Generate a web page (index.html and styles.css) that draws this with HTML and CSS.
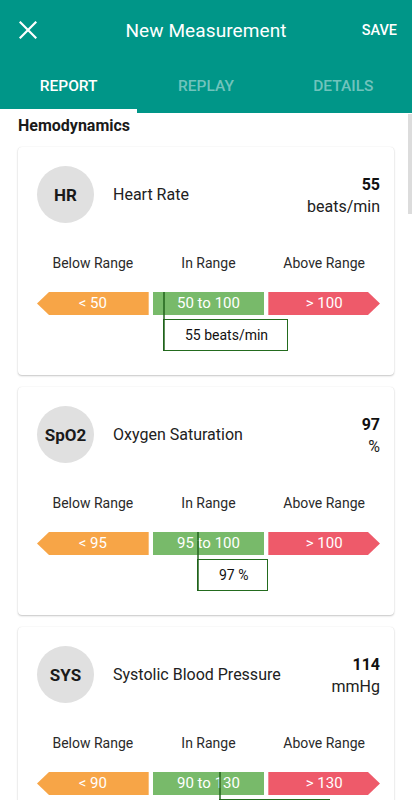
FILE: index.html
```html
<!DOCTYPE html>
<html lang="en">
<head>
<meta charset="utf-8">
<meta name="viewport" content="width=device-width, initial-scale=1">
<title>New Measurement</title>
<link rel="stylesheet" href="styles.css">
</head>
<body>
<div class="screen">
  <header class="appbar">
    <div class="toolbar">
      <div class="tb-left">
        <button class="close" aria-label="Close">
          <svg width="18" height="18" viewBox="0 0 18 18"><path d="M1.5 1.5 L16.5 16.5 M16.5 1.5 L1.5 16.5" stroke="#fff" stroke-width="2.2" fill="none" stroke-linecap="square"/></svg>
        </button>
      </div>
      <h1 class="title">New Measurement</h1>
      <div class="tb-right"><button class="save">SAVE</button></div>
    </div>
    <nav class="tabs">
      <div class="tab active">REPORT</div>
      <div class="tab">REPLAY</div>
      <div class="tab">DETAILS</div>
    </nav>
  </header>

  <main class="content">
    <h2 class="section">Hemodynamics</h2>

    <section class="card">
      <div class="card-head">
        <div class="avatar">HR</div>
        <div class="name">Heart Rate</div>
        <div class="value"><div class="num">55</div><div class="unit">beats/min</div></div>
      </div>
      <div class="labels"><span>Below Range</span><span>In Range</span><span>Above Range</span></div>
      <div class="bars">
        <div class="seg low">&lt; 50</div>
        <div class="seg mid">50 to 100</div>
        <div class="seg high">&gt; 100</div>
      </div>
      <div class="marker-row"><div class="marker" style="margin-left:126px">55 beats/min</div></div>
    </section>

    <section class="card">
      <div class="card-head">
        <div class="avatar">SpO2</div>
        <div class="name">Oxygen Saturation</div>
        <div class="value"><div class="num">97</div><div class="unit">%</div></div>
      </div>
      <div class="labels"><span>Below Range</span><span>In Range</span><span>Above Range</span></div>
      <div class="bars">
        <div class="seg low">&lt; 95</div>
        <div class="seg mid">95 to 100</div>
        <div class="seg high">&gt; 100</div>
      </div>
      <div class="marker-row"><div class="marker" style="margin-left:160px">97 %</div></div>
    </section>

    <section class="card">
      <div class="card-head">
        <div class="avatar">SYS</div>
        <div class="name">Systolic Blood Pressure</div>
        <div class="value"><div class="num">114</div><div class="unit">mmHg</div></div>
      </div>
      <div class="labels"><span>Below Range</span><span>In Range</span><span>Above Range</span></div>
      <div class="bars">
        <div class="seg low">&lt; 90</div>
        <div class="seg mid">90 to 130</div>
        <div class="seg high">&gt; 130</div>
      </div>
      <div class="marker-row"><div class="marker" style="margin-left:182px">114 mmHg</div></div>
    </section>
  </main>

  <div class="scrollbar"></div>
</div>
</body>
</html>
```

FILE: styles.css
```css
* { box-sizing: border-box; }
html, body {
  margin: 0;
  padding: 0;
  overflow: hidden;
  background: #fff;
}
body {
  font-family: Roboto, "Noto Sans", "Liberation Sans", sans-serif;
  color: #212121;
}
.screen {
  position: relative;
  width: 412px;
  height: 800px;
  overflow: hidden;
}
.appbar {
  background: #009688;
  color: #fff;
}
.toolbar {
  height: 60px;
  display: grid;
  grid-template-columns: 1fr auto 1fr;
  align-items: center;
}
.tb-left { padding-left: 19px; display: flex; align-items: center; }
.tb-right { display: flex; justify-content: flex-end; padding-right: 15px; }
.close {
  background: none;
  border: 0;
  padding: 0;
  width: 18px;
  height: 18px;
  display: block;
  margin-top: -1px;
}
.close svg { display: block; }
.title {
  margin: 0;
  font-size: 19px;
  font-weight: 400;
  letter-spacing: 0.1px;
}
.save {
  background: none;
  border: 0;
  padding: 0;
  color: #fff;
  font-family: inherit;
  font-size: 14.5px;
  font-weight: 500;
}
.tabs {
  display: grid;
  grid-template-columns: 1fr 1fr 1fr;
  height: 53px;
}
.tab {
  display: flex;
  align-items: center;
  justify-content: center;
  padding-top: 3px;
  font-size: 15.5px;
  font-weight: 500;
  color: rgba(255, 255, 255, 0.45);
  border-bottom: 4px solid transparent;
}
.tab.active {
  color: #fff;
  border-bottom-color: #fff;
}
.content {
  padding: 3px 18px 0;
}
.section {
  margin: 0 0 11px;
  font-size: 16px;
  line-height: 20px;
  font-weight: 700;
  color: #1a1a1a;
}
.card {
  background: #fff;
  border-radius: 4px;
  box-shadow: 0 1px 2px rgba(0, 0, 0, 0.22), 0 0 1px rgba(0, 0, 0, 0.12);
  padding: 19px 14px 24px 19px;
  margin-bottom: 12px;
}
.card-head {
  display: flex;
  align-items: center;
  height: 57px;
}
.avatar {
  width: 57px;
  height: 57px;
  border-radius: 50%;
  background: #e0e0e0;
  display: flex;
  align-items: center;
  justify-content: center;
  font-weight: 700;
  font-size: 17px;
  color: #1a1a1a;
  flex: none;
}
.name {
  flex: 1;
  margin-left: 19px;
  font-size: 16px;
  color: #212121;
}
.value {
  text-align: right;
  margin-top: 2px;
}
.num {
  font-size: 16px;
  font-weight: 700;
  line-height: 22px;
  color: #111;
}
.unit {
  font-size: 16px;
  line-height: 22px;
  color: #212121;
}
.labels {
  margin-top: 30px;
  display: grid;
  grid-template-columns: 1fr 1fr 1fr;
  column-gap: 4px;
  line-height: 20px;
  font-size: 14px;
  color: #2a2a2a;
  text-align: center;
}
.bars {
  margin-top: 19px;
  display: grid;
  grid-template-columns: 1fr 1fr 1fr;
  column-gap: 4px;
}
.seg {
  height: 23px;
  line-height: 23px;
  text-align: center;
  color: #fff;
  font-size: 15px;
}
.seg.low {
  background: #f7a547;
  clip-path: polygon(12px 0, 100% 0, 100% 100%, 12px 100%, 0 50%);
}
.seg.mid {
  background: #78ba6a;
}
.seg.high {
  background: #ee5a6a;
  clip-path: polygon(0 0, calc(100% - 12px) 0, 100% 50%, calc(100% - 12px) 100%, 0 100%);
}
.marker-row {
  margin-top: 4px;
  display: flex;
}
.marker {
  position: relative;
  height: 32px;
  line-height: 30px;
  padding: 0 19px 0 21px;
  border: 1px solid #236b1e;
  font-size: 14px;
  color: #111;
  white-space: nowrap;
}
.marker::before {
  content: "";
  position: absolute;
  left: -1px;
  top: -28px;
  bottom: -1px;
  width: 2px;
  background: rgba(30, 95, 25, 0.72);
}
.scrollbar {
  position: absolute;
  right: 0;
  top: 114px;
  width: 4px;
  height: 100px;
  background: #dcdcdc;
}
```
